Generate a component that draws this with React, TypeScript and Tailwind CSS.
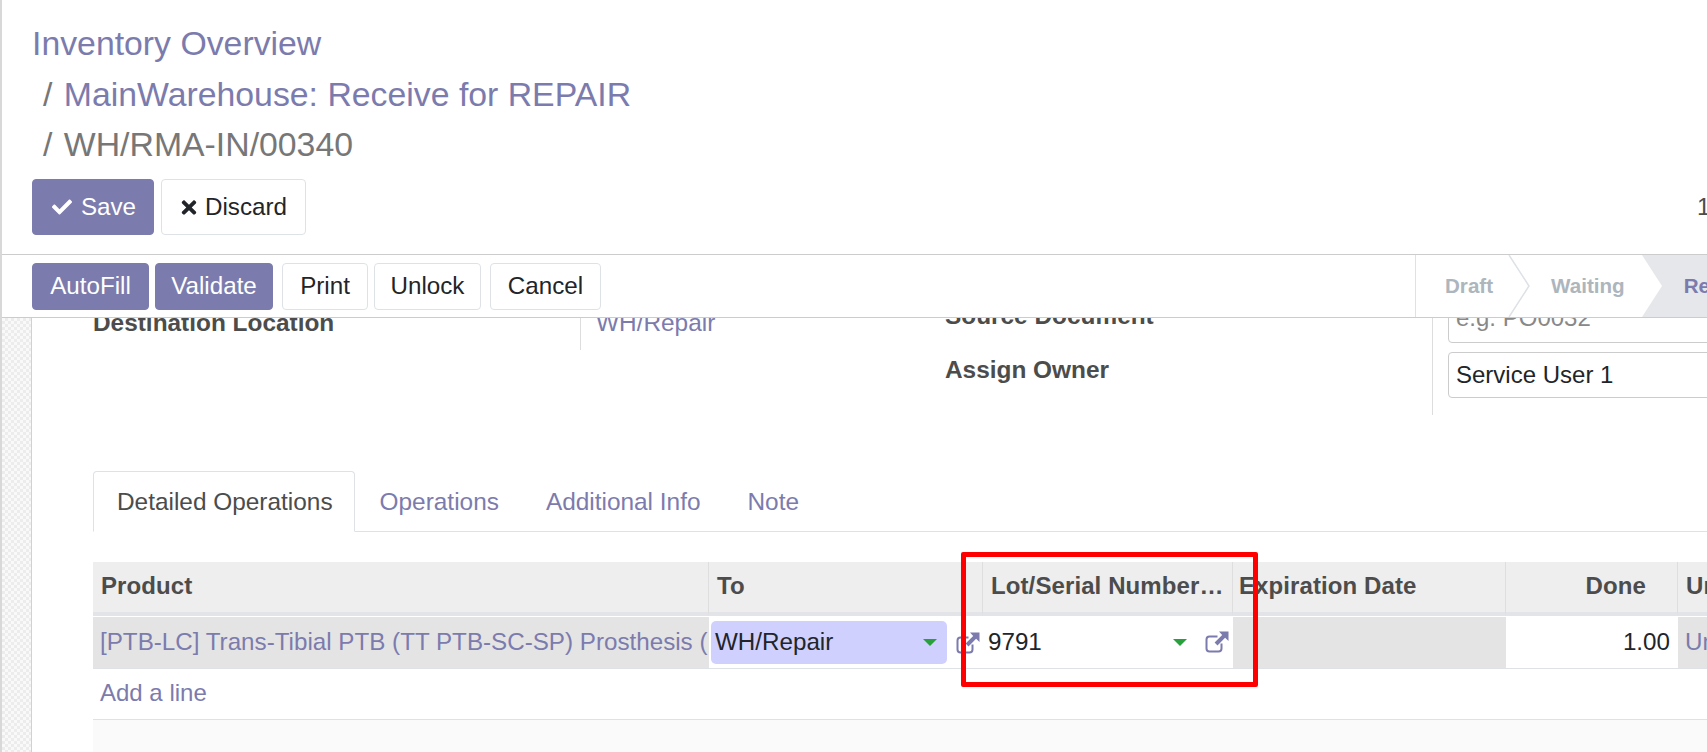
import type { ReactNode } from "react";
import { FaCheck, FaTimes } from "react-icons/fa";

const LINK = "text-[#7c7bad]";

function Ext() {
  return (
    <svg viewBox="0 0 24 22" className="h-[22px] w-[24px] shrink-0 fill-none">
      <path d="M16.5 12.5v5a3 3 0 0 1-3 3h-9a3 3 0 0 1-3-3v-9a3 3 0 0 1 3-3h8" stroke="#7c7bad" strokeWidth="2" />
      <path d="M14 0.5h9.5V10l-3.4-3.2-7.6 7.6-2.9-2.9 7.6-7.6z" fill="#7c7bad" />
    </svg>
  );
}

function Caret() {
  return <span className="block h-0 w-0 shrink-0 border-x-[7px] border-t-[7px] border-x-transparent border-t-[#28a03c]" />;
}

function Btn({ children, primary, className = "" }: { children: ReactNode; primary?: boolean; className?: string }) {
  return (
    <button
      className={
        "flex shrink-0 items-center justify-center rounded-[4px] border text-[24.2px] " +
        (primary ? "border-[#7c7bad] bg-[#7c7bad] text-white " : "border-[#dee2e6] bg-white text-[#212529] ") +
        className
      }
    >
      {children}
    </button>
  );
}

const TH = "h-[54px] border-b-4 border-r border-b-[#e2e4e8] border-r-[#dedede] bg-[#eeeeee] px-[8px] pb-[2px] text-left font-bold tracking-[0.1px] whitespace-nowrap overflow-hidden";
const TD = "h-[53px] border-b border-t border-b-[#dee2e6] border-t-white p-0 text-[24.2px] overflow-hidden whitespace-nowrap";

export default function App() {
  return (
    <div className="relative flex h-[752px] w-full flex-col overflow-hidden border-l-2 border-[#d8d8d8] bg-white font-['Liberation_Sans',Arial,sans-serif] text-[24px] text-[#4c4c4c]">
      {/* Control panel */}
      <header className="h-[255px] shrink-0 border-b border-[#cccccc] px-[30px] pt-[19px]">
        <div className="text-[33.8px] leading-[50px] text-[#777777]">
          <div className={"-mt-px pb-px " + LINK}>Inventory Overview</div>
          <div className="pl-[11px]">
            <span>/ </span>
            <span className={"ml-[2px] " + LINK}>MainWarehouse: Receive for REPAIR</span>
          </div>
          <div className="pl-[11px]">
            <span>/ </span>
            <span className="ml-[2px]">WH/RMA-IN/00340</span>
          </div>
        </div>
        <div className="mt-[10px] flex items-center gap-[7px]">
          <Btn primary className="h-[56px] w-[122px] gap-[9px] pl-[2px]">
            <FaCheck className="h-[20px] w-[20px]" />
            Save
          </Btn>
          <Btn className="h-[56px] w-[145px] gap-[7px]">
            <FaTimes className="h-[21px] w-[18px]" />
            Discard
          </Btn>
          <div className="ml-[1384px] shrink-0 whitespace-nowrap">1 / 1</div>
        </div>
      </header>

      {/* Action bar */}
      <div className="flex h-[63px] shrink-0 items-start justify-between border-b border-[#cccccc] bg-white pl-[30px]">
        <div className="mt-[8px] flex gap-[6px]">
          <Btn primary className="h-[47px] w-[117px] pb-px">AutoFill</Btn>
          <Btn primary className="h-[47px] w-[118px] pb-px">Validate</Btn>
          <Btn className="ml-[3px] h-[47px] w-[86px] pb-px">Print</Btn>
          <Btn className="h-[47px] w-[107px] pb-px">Unlock</Btn>
          <Btn className="ml-[3px] h-[47px] w-[111px] pb-px">Cancel</Btn>
        </div>
        <div className="relative flex h-[62px] w-[292px] items-center border-l border-[#dee2e6] text-[20.6px] font-bold">
          <svg viewBox="0 0 291 62" className="absolute inset-0 h-full w-full" preserveAspectRatio="none">
            <path d="M226 0H291V62H226L246 31z" fill="#e5e7ea" />
            <path d="M93 0 113 31 93 62" stroke="#dee2e6" strokeWidth="1.500" fill="none" />
          </svg>
          <span className="relative ml-[29px] text-[#adb5bd]">Draft</span>
          <span className="relative ml-[58px] text-[#adb5bd]">Waiting</span>
          <span className={"relative ml-[59px] whitespace-nowrap " + LINK}>Ready</span>
        </div>
      </div>

      {/* Scrolled content */}
      <div className="flex min-h-0 flex-1 overflow-hidden">
        <div className="w-[30px] shrink-0 border-r border-[#d0d0d8] bg-[repeating-conic-gradient(#ececec_0_25%,#f9f9f9_0_50%)] bg-[length:6px_6px]" />
        <main className="flex w-[1800px] shrink-0 flex-col">
          <div className="-mt-[21px] flex h-[118px] shrink-0">
            <div className="w-[548px] shrink-0 pl-[61px] pt-[12px] text-[24.4px] font-bold leading-[28px] whitespace-nowrap">
              Destination Location
            </div>
            <div className={"h-[53px] w-[365px] shrink-0 border-l border-[#dddddd] pl-[15px] pt-[12px] text-[24.4px] leading-[28px] " + LINK}>WH/Repair</div>
            <div className="w-[487px] shrink-0 pt-[5px] text-[24.4px] font-bold leading-[28px]">
              <div>Source Document</div>
              <div className="mt-[26px]">Assign Owner</div>
            </div>
            <div className="h-full w-[400px] shrink-0 border-l border-[#dddddd] pl-[15px]">
              <div className="flex h-[46px] items-center rounded-[4px] border border-[#cccccc] px-[7px] pb-[5px] text-[#888888]">e.g. PO0032</div>
              <div className="mt-[9px] flex h-[46px] items-center rounded-[4px] border border-[#cccccc] px-[7px] text-[#212529]">Service User 1</div>
            </div>
          </div>

          {/* Tabs */}
          <div className="ml-[61px] mt-[56px] flex h-[61px] shrink-0 border-b border-[#dee2e6] text-[24.4px]">
            <div className="-mb-px flex h-[61px] items-center rounded-t-[4px] border border-[#dee2e6] border-b-white pl-[23px] pr-[21px] pt-[2px] text-[#4c4c4c]">Detailed Operations</div>
            <div className={"flex items-center pl-[25px] pr-[23.5px] pt-[2px] " + LINK}>Operations</div>
            <div className={"flex items-center px-[23.5px] pt-[2px] " + LINK}>Additional Info</div>
            <div className={"flex items-center px-[23.5px] pt-[2px] " + LINK}>Note</div>
          </div>

          {/* Table */}
          <div className="ml-[61px] mt-[30px] flex min-h-0 flex-1 flex-col">
            <table className="w-[1707px] shrink-0 table-fixed border-separate border-spacing-0">
              <colgroup>
                <col className="w-[616px]" />
                <col className="w-[274px]" />
                <col className="w-[250px]" />
                <col className="w-[273px]" />
                <col className="w-[172px]" />
                <col />
              </colgroup>
              <thead>
                <tr>
                  <th className={TH}>Product</th>
                  <th className={TH}>To</th>
                  <th className={TH + " !pr-[4px] text-ellipsis"}>Lot/Serial Number Name</th>
                  <th className={TH + " !pl-[6px]"}>Expiration Date</th>
                  <th className={TH + " !pr-[31px] !text-right"}>Done</th>
                  <th className={TH}>Unit of Measure</th>
                </tr>
              </thead>
              <tbody>
                <tr>
                  <td className={TD + " bg-[#e4e4e4] pl-[7px] " + LINK}>[PTB-LC] Trans-Tibial PTB (TT PTB-SC-SP) Prosthesis (Left)</td>
                  <td className={TD + " bg-white pl-[2px] text-[#212529]"}>
                    <div className="flex items-center">
                      <div className="flex h-[43px] w-[236px] items-center justify-between rounded-[5px] bg-[#d0d0ff] pl-[4px] pr-[10px]">
                        WH/Repair
                        <Caret />
                      </div>
                      <span className="ml-[9px]"><Ext /></span>
                    </div>
                  </td>
                  <td className={TD + " bg-white pl-[5px] text-[#212529]"}>
                    <div className="flex items-center">
                      <span className="w-[185px]">9791</span>
                      <Caret />
                      <span className="ml-[18px]"><Ext /></span>
                    </div>
                  </td>
                  <td className={TD + " bg-[#e4e4e4]"} />
                  <td className={TD + " bg-white pr-[8px] text-right text-[#212529]"}>1.00</td>
                  <td className={TD + " bg-[#e4e4e4] pl-[7px] " + LINK}>Units</td>
                </tr>
                <tr>
                  <td colSpan={6} className="h-[51px] border-b border-[#dee2e6] p-0 pb-[2px] pl-[7px]">
                    <span className={LINK}>Add a line</span>
                  </td>
                </tr>
              </tbody>
            </table>
            <div className="w-[1707px] flex-1 bg-[#fafafa]" />
          </div>
        </main>
      </div>

      {/* Annotation drawn over the screenshot */}
      <div className="absolute left-[959px] top-[552px] h-[135px] w-[297px] rounded-[2px] border-[5px] border-[#ff0000]" />
    </div>
  );
}
